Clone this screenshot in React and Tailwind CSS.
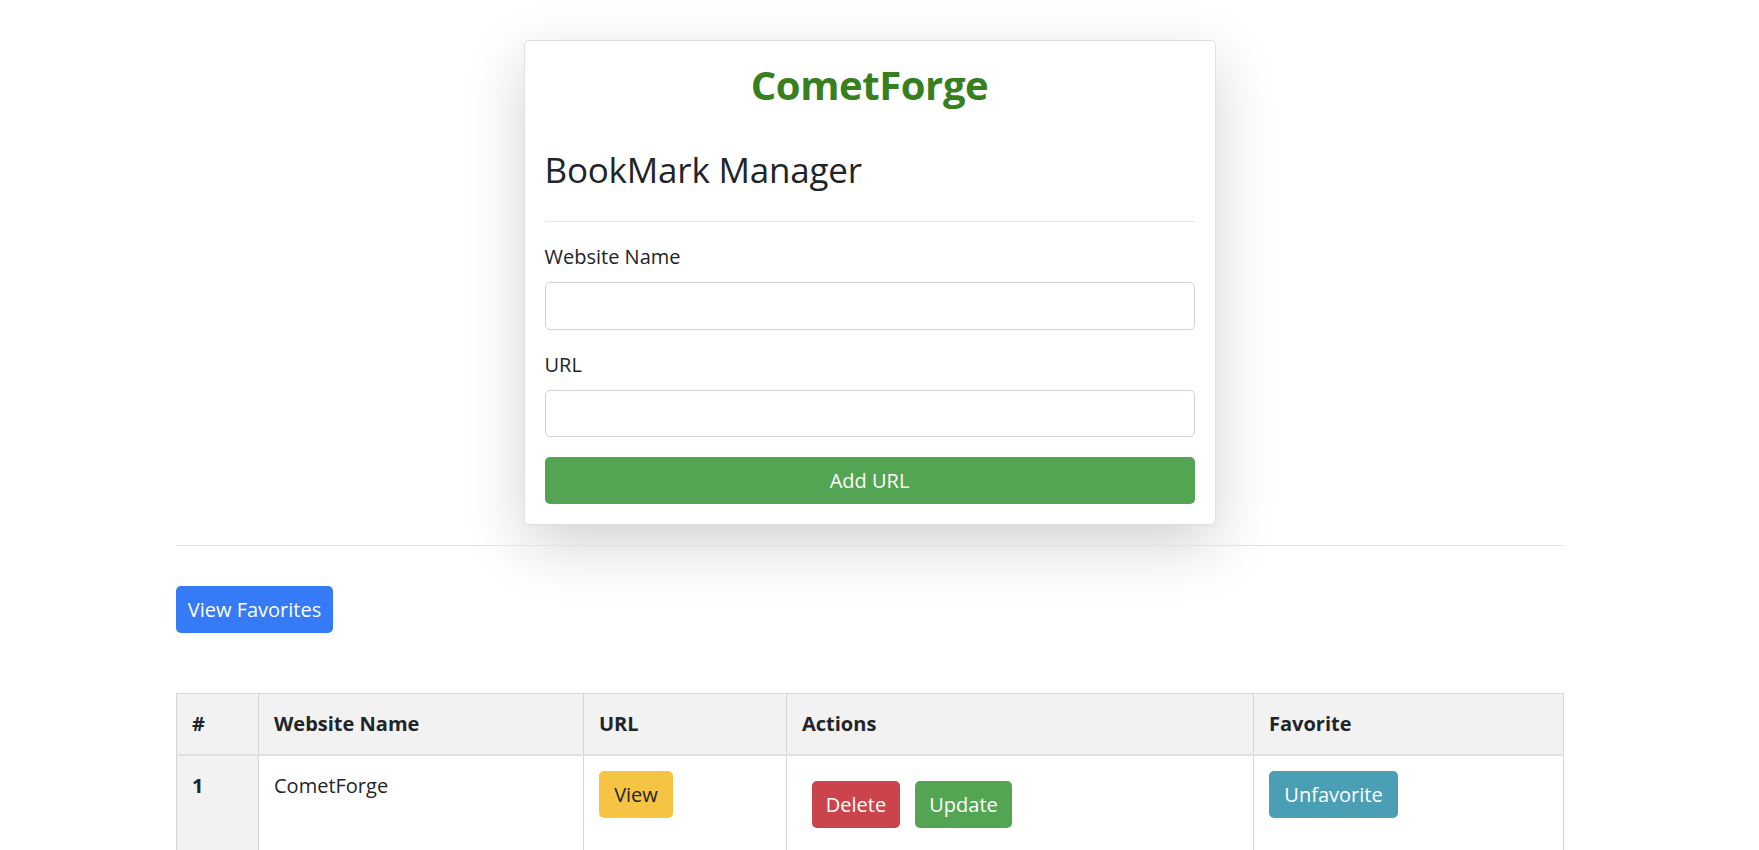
export default function App() {
  return (
    <div className="min-h-screen bg-white text-[#212529] font-['Open_Sans',sans-serif] pr-[20px]">
      <div className="mx-auto w-[1387px] pt-[40px]">
        <div className="mx-auto w-[692px] rounded-[5px] border border-[#dfdfdf] bg-white p-[20px] shadow-[0_20px_60px_rgba(0,0,0,0.175)]">
          <h2 className="text-center text-[40px] font-bold leading-[48px] tracking-[-0.4px] text-[#38801f]">CometForge</h2>
          <h3 className="mt-[40px] text-[35px] font-medium leading-[42px] tracking-[-0.2px]">BookMark Manager</h3>
          <hr className="mt-[30px] mb-[20px] border-0 border-t border-t-[#e5e5e5]" />
          <div className="mb-[20px]">
            <label className="block text-[20px] leading-[30px] mb-[10px]">Website Name</label>
            <input type="text" className="block w-full h-[47.5px] rounded-[5px] border border-[#ced4da] bg-white px-[15px] text-[20px] outline-none" />
          </div>
          <div className="mb-[20px]">
            <label className="block text-[20px] leading-[30px] mb-[10px]">URL</label>
            <input type="text" className="block w-full h-[47.5px] rounded-[5px] border border-[#ced4da] bg-white px-[15px] text-[20px] outline-none" />
          </div>
          <button className="block w-full h-[47px] rounded-[5px] bg-[#53a553] text-white text-[20px] leading-[30px]">Add URL</button>
        </div>

        <hr className="mt-[20px] mb-[40px] border-0 border-t border-t-[#e2e2e2]" />

        <button className="h-[47px] w-[157px] rounded-[5px] bg-[#357af6] text-white text-[20px] leading-[30px]">View Favorites</button>

        <table className="mt-[60px] w-full table-fixed border-collapse text-[20px] leading-[30px]">
          <colgroup>
            <col className="w-[82px]" />
            <col className="w-[325px]" />
            <col className="w-[203px]" />
            <col className="w-[467px]" />
            <col className="w-[310px]" />
          </colgroup>
          <thead>
            <tr className="bg-[#f2f2f2]">
              <th className="border border-[#d6d6d6] border-b-[2.5px] border-b-[#dee2e6] p-[15px] text-left font-bold">#</th>
              <th className="border border-[#d6d6d6] border-b-[2.5px] border-b-[#dee2e6] p-[15px] text-left font-bold">Website Name</th>
              <th className="border border-[#d6d6d6] border-b-[2.5px] border-b-[#dee2e6] p-[15px] text-left font-bold">URL</th>
              <th className="border border-[#d6d6d6] border-b-[2.5px] border-b-[#dee2e6] p-[15px] text-left font-bold">Actions</th>
              <th className="border border-[#d6d6d6] border-b-[2.5px] border-b-[#dee2e6] p-[15px] text-left font-bold">Favorite</th>
            </tr>
          </thead>
          <tbody>
            <tr>
              <th className="border border-[#d6d6d6] bg-[#f2f2f2] p-[15px] text-left align-top font-bold">1</th>
              <td className="border border-[#d6d6d6] p-[15px] align-top">CometForge</td>
              <td className="border border-[#d6d6d6] p-[15px] align-top">
                <button className="h-[47px] w-[74px] rounded-[5px] bg-[#f6c443] text-[#212529] text-[20px] leading-[30px]">View</button>
              </td>
              <td className="border border-[#d6d6d6] p-[15px] align-top">
                <div className="flex gap-[15px] pl-[10px] pt-[10px] pb-[10px]">
                  <button className="h-[47px] w-[88px] rounded-[5px] bg-[#cb444b] text-white text-[20px] leading-[30px]">Delete</button>
                  <button className="h-[47px] w-[97px] rounded-[5px] bg-[#53a553] text-white text-[20px] leading-[30px]">Update</button>
                </div>
              </td>
              <td className="border border-[#d6d6d6] p-[15px] align-top">
                <button className="h-[47px] w-[129px] rounded-[5px] bg-[#4a9fb5] text-white text-[20px] leading-[30px]">Unfavorite</button>
              </td>
            </tr>
          </tbody>
        </table>
      </div>
    </div>
  );
}
